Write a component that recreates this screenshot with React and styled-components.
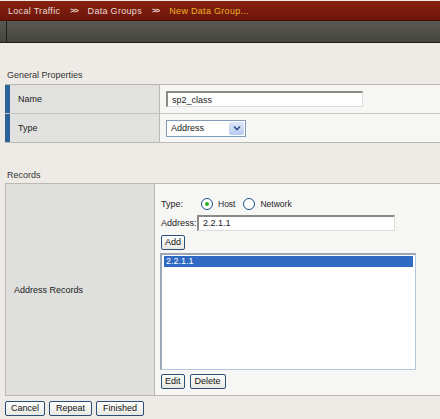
import React from "react";
import styled, { createGlobalStyle } from "styled-components";

const GlobalStyle = createGlobalStyle`
  html, body {
    margin: 0;
    padding: 0;
    background: #eeebe6;
    font-family: "Liberation Sans", Arial, sans-serif;
    font-size: 9px;
    color: #222;
  }
`;

const Page = styled.div`
  width: 440px;
  height: 419px;
  overflow: hidden;
  padding-top: 1px;
`;

const Crumbs = styled.div`
  height: 19px;
  background: linear-gradient(#85200f, #6e160c);
  border-bottom: 1px solid #4a0d06;
  display: flex;
  align-items: center;
  padding-left: 8px;
  gap: 10px;
  font-size: 9px;
  letter-spacing: 0.3px;
`;

const Crumb = styled.span`
  color: ${(p) => (p.$current ? "#f0b326" : "#eadbd6")};
`;

const Sep = styled.span`
  color: #eadbd6;
  font-weight: bold;
  font-size: 8px;
  letter-spacing: -1px;
`;

const Toolbar = styled.div`
  height: 21px;
  background: linear-gradient(#5a5a52, #45453f);
  border-bottom: 1px solid #1d1d1a;
  display: flex;
`;

const ToolbarEdge = styled.div`
  width: 6px;
  border-right: 1px solid #1f1f1c;
`;

const SectionTitle = styled.div`
  height: 14px;
  line-height: 14px;
  padding-left: 7px;
  margin-top: ${(p) => p.$top}px;
  margin-bottom: ${(p) => p.$bottom}px;
  color: #333;
`;

const PropTable = styled.div`
  margin-left: 5px;
  border-top: 1px solid #b8b8b4;
  border-bottom: 1px solid #b8b8b4;
`;

const PropRow = styled.div`
  display: flex;
  height: 28px;
  & + & {
    border-top: 1px solid #c4c4c0;
  }
`;

const PropLabel = styled.div`
  width: 155px;
  box-sizing: border-box;
  background: #e1e1df;
  border-left: 5px solid #2b6299;
  border-right: 1px solid #b8b8b4;
  display: flex;
  align-items: center;
  padding-left: 8px;
`;

const PropValue = styled.div`
  flex: 1;
  background: #f6f6f5;
  display: flex;
  align-items: center;
  padding-left: 6px;
`;

const TextInput = styled.div`
  width: ${(p) => p.$w}px;
  height: 16px;
  box-sizing: border-box;
  background: #fff;
  border: 1px solid #dcdcd8;
  border-top: 2px solid #8c8a84;
  border-left: 2px solid #8c8a84;
  padding-left: 4px;
  display: flex;
  align-items: center;
  color: #222;
`;

const Select = styled.div`
  width: 80px;
  height: 17px;
  box-sizing: border-box;
  background: #fff;
  border: 1px solid #7f9db9;
  display: flex;
  align-items: center;
  justify-content: space-between;
  padding: 0 1px 0 4px;
`;

const SelectArrow = styled.div`
  width: 15px;
  height: 13px;
  background: linear-gradient(#dce6f8, #b8ccf0);
  border-radius: 2px;
  display: flex;
  align-items: center;
  justify-content: center;
`;

const RecordsTable = styled.div`
  margin-left: 5px;
  height: 211px;
  display: flex;
  border-top: 1px solid #b8b8b4;
  border-bottom: 1px solid #b8b8b4;
`;

const RecordsLabel = styled.div`
  width: 150px;
  background: #dfdfdd;
  border-left: 1px solid #b8b8b4;
  border-right: 1px solid #b8b8b4;
  display: flex;
  align-items: center;
  padding-left: 8px;
  box-sizing: border-box;
`;

const RecordsValue = styled.div`
  flex: 1;
  background: #f6f6f5;
  padding: 11px 0 0 6px;
  display: flex;
  flex-direction: column;
`;

const FieldRow = styled.div`
  display: flex;
  align-items: center;
  height: 17px;
  margin-bottom: ${(p) => p.$mb || 0}px;
`;

const FieldLabel = styled.span`
  width: ${(p) => p.$w}px;
`;

const Radio = styled.span`
  width: 10px;
  height: 10px;
  border-radius: 50%;
  border: 1px solid #1c5180;
  background: #fff;
  display: inline-flex;
  align-items: center;
  justify-content: center;
  margin-right: 5px;
  &::after {
    content: "";
    width: 4px;
    height: 4px;
    border-radius: 50%;
    background: ${(p) => (p.$checked ? "#24b824" : "transparent")};
  }
`;

const RadioText = styled.span`
  margin-right: ${(p) => p.$mr || 5}px;
  font-size: 8.5px;
`;

const Button = styled.button`
  font-family: "Liberation Sans", Arial, sans-serif;
  font-size: 9px;
  height: 15px;
  padding: 0 ${(p) => p.$px || 4}px;
  background: linear-gradient(#fefefe, #e8e8e2);
  border: 1px solid #2b4f78;
  border-radius: 2px;
  color: #111;
  line-height: 13px;
`;

const ListBox = styled.div`
  width: 256px;
  height: 117px;
  box-sizing: border-box;
  background: #fff;
  border: 1px solid #b5c7dd;
  border-left: 2px solid #9aa8b8;
  border-top: 2px solid #9aa8b8;
  padding: 1px 2px;
  margin: 3px 0 4px -1px;
`;

const ListItem = styled.div`
  height: 11px;
  line-height: 11px;
  background: ${(p) => (p.$selected ? "#316ac5" : "transparent")};
  color: ${(p) => (p.$selected ? "#fff" : "#222")};
  padding-left: 2px;
`;

const ButtonRow = styled.div`
  display: flex;
  gap: ${(p) => p.$gap || 4}px;
  padding-left: ${(p) => p.$pl || 0}px;
  margin-top: ${(p) => p.$mt || 0}px;
`;

export default function App() {
  return (
    <>
      <GlobalStyle />
      <Page>
        <Crumbs>
          <Crumb>Local Traffic</Crumb>
          <Sep>&gt;&gt;</Sep>
          <Crumb>Data Groups</Crumb>
          <Sep>&gt;&gt;</Sep>
          <Crumb $current>New Data Group...</Crumb>
        </Crumbs>
        <Toolbar>
          <ToolbarEdge />
        </Toolbar>

        <SectionTitle $top={25} $bottom={2}>General Properties</SectionTitle>
        <PropTable>
          <PropRow>
            <PropLabel>Name</PropLabel>
            <PropValue>
              <TextInput $w={197}>sp2_class</TextInput>
            </PropValue>
          </PropRow>
          <PropRow>
            <PropLabel>Type</PropLabel>
            <PropValue>
              <Select>
                Address
                <SelectArrow>
                  <svg width="8" height="6" viewBox="0 0 8 6">
                    <path d="M1 1.5 L4 4.5 L7 1.5" stroke="#2d4f8a" strokeWidth="1.6" fill="none" />
                  </svg>
                </SelectArrow>
              </Select>
            </PropValue>
          </PropRow>
        </PropTable>

        <SectionTitle $top={25} $bottom={1}>Records</SectionTitle>
        <RecordsTable>
          <RecordsLabel>Address Records</RecordsLabel>
          <RecordsValue>
            <FieldRow $mb={2}>
              <FieldLabel $w={40}>Type:</FieldLabel>
              <Radio $checked />
              <RadioText $mr={8}>Host</RadioText>
              <Radio />
              <RadioText>Network</RadioText>
            </FieldRow>
            <FieldRow $mb={4}>
              <FieldLabel $w={36}>Address:</FieldLabel>
              <TextInput $w={198}>2.2.1.1</TextInput>
            </FieldRow>
            <ButtonRow>
              <Button $px={3}>Add</Button>
            </ButtonRow>
            <ListBox>
              <ListItem $selected>2.2.1.1</ListItem>
            </ListBox>
            <ButtonRow $gap={5}>
              <Button $px={3}>Edit</Button>
              <Button>Delete</Button>
            </ButtonRow>
          </RecordsValue>
        </RecordsTable>
        <ButtonRow $pl={5} $mt={5}>
          <Button $px={5}>Cancel</Button>
          <Button $px={6}>Repeat</Button>
          <Button $px={6}>Finished</Button>
        </ButtonRow>
      </Page>
    </>
  );
}
